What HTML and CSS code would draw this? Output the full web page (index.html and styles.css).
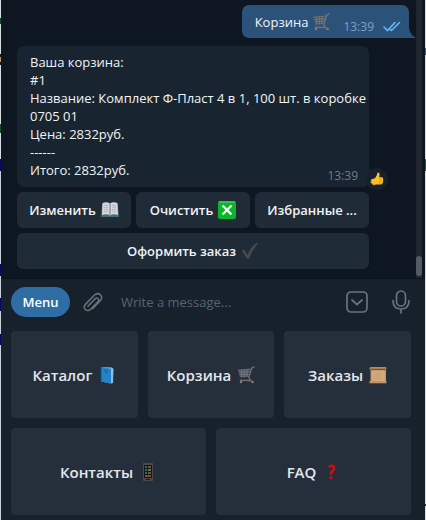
FILE: index.html
```html
<!DOCTYPE html>
<html lang="ru">
<head>
<meta charset="utf-8">
<meta name="viewport" content="width=device-width, initial-scale=1">
<title>Корзина</title>
<link rel="stylesheet" href="styles.css">
</head>
<body>
<svg class="defs" aria-hidden="true">
  <symbol id="cart" viewBox="0 0 18 18">
    <path d="M1 4l12-1-2 7-8 1z" fill="#4d545b"/>
    <path d="M17.500 .8l-2.700 1.200-3 9.500 1.500 2.700H3.500" fill="none" stroke="#777a7d" stroke-width="1.100"/>
    <path d="M1 4.200l13-1.200M2 6.500l11-.8M2.500 8.700l9.700-.5M3.500 11l8-.5M4 4l1 7M7 4l.5 7M10 3.500V10.500" fill="none" stroke="#85888b" stroke-width=".6"/>
    <circle cx="4" cy="16" r="1.300" fill="#9b765c"/><circle cx="15.500" cy="16" r="1.300" fill="#9b765c"/>
    <path d="M3 14.200l12.500.8" stroke="#73777a" stroke-width=".9"/>
  </symbol>
</svg>
<div class="screen">
  <div class="edge edge-left"></div>
  <main class="app">
    <section class="chat">
      <div class="messages">
        <div class="bubble outgoing">
          <span>Корзина</span>
          <svg class="emoji cart" viewBox="0 0 18 18"><use href="#cart"/></svg>
          <time class="sent">13:39</time>
          <svg class="checks" viewBox="0 0 18 11"><path d="M1 6l3.500 3.500L12 1.500M8.500 9.500L16.500 1.500M7.500 8.500l1 1" fill="none" stroke="#69b8f5" stroke-width="1.600" stroke-linecap="round"/></svg>
          <svg class="tail" viewBox="0 0 7 10"><path d="M0 0v10h7Q1 7 0 0z" fill="#2b5278"/></svg>
        </div>
        <article class="incoming">
          <div class="bubble details">
            <p>Ваша корзина:<br>#1<br>Название: Комплект Ф-Пласт 4 в 1, 100 шт. в коробке 0705 01<br>Цена: 2832руб.<br>------<br>Итого: 2832руб.</p>
            <time class="received">13:39</time>
            <button class="reaction" aria-label="Нравится">
              <svg viewBox="0 0 14 14"><path d="M5 6.300L7 2.800Q7.100.5 8.300.6 10.200.8 9.200 5.200H12q1.500.3 1 1.800.8.900 0 2 .5 1-.4 1.700 0 1.500-1.500 1.900H5.500L3.500 13 1 10.500 1.500 7.200z" fill="#ffc02e"/><path d="M9 7h3.500M9 9h3.500M8.800 11h3" stroke="#d98b19" stroke-width=".7"/><path d="M1.500 7.500l-.5 3L3.500 13l2-.5" fill="none" stroke="#e99b22" stroke-width=".9"/></svg>
            </button>
          </div>
          <div class="actions">
            <button>Изменить <svg class="emoji" viewBox="0 0 18 18"><path d="M1 3h16l1 13H0z" fill="#496975"/><path d="M1.500 2Q6 .5 9 2.500 12 .5 16.500 2L17 14Q12 12.500 9 14.500 6 12.500 1 14z" fill="#d4d5d9"/><path d="M9 2.500v12" stroke="#777f88"/><path d="M3 4.500l4-.2M3 6.500l4-.2M3 8.500l4-.2M3 10.500l4-.2M11 4.300l4 .2M11 6.300l4 .2M11 8.300l4 .2M11 10.300l4 .2" stroke="#a8abb3" stroke-width=".7"/></svg></button>
            <button>Очистить <svg class="emoji" viewBox="0 0 18 18"><rect width="18" height="18" rx="2" fill="#0bb52b"/><path d="M1 1h16" stroke="#53d565"/><path d="M4.500 4.500l9 9M13.500 4.500l-9 9" stroke="#f3fff3" stroke-width="2.300"/></svg></button>
            <button>Избранные ...</button>
            <button class="wide">Оформить заказ <svg class="emoji" viewBox="0 0 18 18"><path d="M1 9q2-2 3.500.5L6.500 13Q10 4 16 1q1.500 0 .5 1.500Q11 8 8.500 16q-1.500 1.500-3 0z" fill="#48494b"/></svg></button>
          </div>
        </article>
      </div>
      <div class="scrollbar"><div class="thumb"></div></div>
    </section>
    <form class="composer">
      <button type="button" class="menu">Menu</button>
      <button type="button" class="icon attach" aria-label="Attach"><svg viewBox="0 0 20 22"><path d="M5 14.200l7-7.300q1.700-1.600 3.100-.2 1.300 1.400-.2 3L7.600 17.200q-2.700 2.600-5.200.3-2.500-2.700.2-5.400L11.500 3q3-2.700 5.800-.2 2.800 3-.1 6l-7.700 8" transform="translate(0 1)"/></svg></button>
      <input type="text" aria-label="Message" placeholder="Write a message...">
      <button type="button" class="icon keyboard-toggle" aria-label="Bot keyboard"><svg viewBox="0 0 22 22"><rect x="1" y="1" width="20" height="20" rx="4"/><path d="M6 9l5 4.500L16 9"/></svg></button>
      <button type="button" class="icon voice" aria-label="Voice message"><svg viewBox="0 0 18 24"><rect x="4.500" y="1" width="9" height="15" rx="4.500"/><path d="M1 10.500v1q.5 7.500 8 7.500t8-7.500v-1M9 19v4"/></svg></button>
    </form>
    <section class="keyboard">
      <button>Каталог <svg class="emoji" viewBox="0 0 18 18"><path d="M3.500 1l10.500.5 1.500 1.500-.5 14-2 .5L3.500 15.500z" fill="#88bfe4"/><path d="M3 .8l10 2v14.700L3 15.500z" fill="#2383cd"/><path d="M3.200 1v14.500" stroke="#14629f"/><path d="M6 4.500l4.500.7M7 6.500l2.500.4" stroke="#14639e"/></svg></button>
      <button>Корзина <svg class="emoji cart" viewBox="0 0 18 18"><use href="#cart"/></svg></button>
      <button>Заказы <svg class="emoji" viewBox="0 0 18 18"><path d="M1.500 1h15.500v16H1.500z" fill="#c69b6c"/><path d="M3 4h12.500v11H3z" fill="#d4ae80"/><path d="M.5 1.500h17v2H.5z" fill="#a97b50"/><path d="M2 3.700h14.500" stroke="#65452f"/><path d="M.5 15h17v2.300H.5z" fill="#c4935f"/><path d="M4 7h10M4 9h10M4 11h10M4 13h10" stroke="#c0986b" stroke-width=".7"/></svg></button>
      <button class="half">Контакты <svg class="emoji" viewBox="0 0 18 18"><rect x="4" width="10" height="18" rx="1" fill="#4c4a47"/><path d="M5 2h8v13H5z" fill="#11191a"/><path d="M6 4h2M6 7h2M6 10h2" stroke="#368677" stroke-width="1.400"/><path d="M9 4h3M9 10h3M6 13h6" stroke="#a65b42" stroke-width="1.400"/><path d="M9 7h3" stroke="#8c9361" stroke-width="1.400"/><path d="M7 16.500h4" stroke="#191b1c"/></svg></button>
      <button class="half">FAQ <svg class="emoji" viewBox="0 0 18 18"><path d="M6.500 4Q11.800 1.200 12 5q0 2-1.800 3.500-1.500 1-1.300 3" fill="none" stroke="#c41116" stroke-width="2.800"/><circle cx="9" cy="14.700" r="1.700" fill="#c41116"/></svg></button>
    </section>
  </main>
  <div class="edge edge-right"></div>
</div>
</body>
</html>
```
FILE: styles.css
```css
* { box-sizing: border-box; }
body {
  margin: 0;
  background: #17212b;
  color: #f1f4f6;
  font: 13px/18px "Open Sans", "Noto Sans", sans-serif;
}
button, input { font: inherit; color: inherit; border: 0; padding: 0; margin: 0; }
button { cursor: pointer; }
svg { display: block; flex: none; }
p { margin: 0; }
.defs { position: absolute; width: 0; height: 0; }
.screen { display: flex; min-height: 100vh; }
.edge { flex: 0 0 1px; }
.edge-left {
  background: linear-gradient(#d5dfe2 0 18px, #164b28 18px 24px, #d5dfe2 24px 54px, #17191a 54px 57px, #c29565 57px 62px, #17191a 62px 65px, #d5dfe2 65px 124px, #174d28 124px 133px, #d5dfe2 133px 159px, #09095f 159px 171px, #c4d1d8 171px 264px, #09095f 264px 276px, #c4d1d8 276px 298px, #09095f 298px 311px, #c4d1d8 311px 334px, #09095f 334px 345px, #c4d1d8 345px);
}
.edge-right {
  background: linear-gradient(#d9e0e4 0 48px, #246aa5 48px 55px, #d9e0e4 55px 159px, #14632a 159px 171px, #d9e0e4 171px 504px, #26313a 504px 506px, #d9e0e4 506px);
}
.app { flex: 1; min-width: 0; display: flex; flex-direction: column; }
.chat { display: flex; background: #0e1621; border-bottom: 1px solid #0b131b; }
.messages { flex: 1; min-width: 0; padding: 5px 7px 9px 16px; }
.scrollbar { width: 6px; margin-right: 3px; background: #20272f; display: flex; align-items: flex-end; padding-bottom: 2px; }
.thumb { width: 6px; height: 20px; border-radius: 3px; background: #555b64; }
.bubble { position: relative; border-radius: 7px; }
.outgoing {
  display: flex;
  align-items: center;
  width: fit-content;
  height: 33px;
  margin-left: auto;
  padding: 0 8px 0 13px;
  background: #2b5278;
  border-bottom-right-radius: 0;
}
.outgoing .emoji { margin-left: 4px; }
.emoji { width: 18px; height: 18px; }
.sent, .received { font-size: 12px; }
.sent { margin: 10px 9px 0 13px; color: #79a2c8; }
.checks { width: 18px; height: 11px; margin-top: 10px; }
.tail { position: absolute; left: 100%; bottom: 0; width: 7px; height: 10px; }
.incoming { width: calc(100% - 40px); margin-top: 8px; }
.details { padding: 7px 2px 8px 13px; background: #182530; }
.received { position: absolute; right: 11px; bottom: 2px; color: #6c7c8b; }
.reaction {
  position: absolute;
  right: -19px;
  bottom: -3px;
  width: 22px;
  height: 22px;
  border-radius: 50%;
  background: #16212b;
  display: grid;
  place-items: center;
}
.reaction svg { width: 14px; height: 14px; }
.actions { display: grid; grid-template-columns: repeat(3, 1fr); gap: 5px; margin-top: 5px; }
.actions button, .keyboard button { display: flex; align-items: center; justify-content: center; gap: 5px; white-space: nowrap; }
.actions button { height: 36px; border-radius: 6px; background: #1f2c38; font-weight: 600; }
.actions .wide { grid-column: 1 / -1; }
.composer { display: flex; align-items: center; height: 46px; padding: 0 15px 0 10px; background: #17212b; }
.menu { width: 59px; height: 30px; border-radius: 15px; background: #2f6ea5; color: #fff; font-weight: 600; }
.icon { background: none; }
.icon svg { fill: none; stroke: #6a737c; stroke-width: 2; stroke-linecap: round; }
.attach { margin-left: 13px; }
.attach svg { width: 20px; height: 22px; stroke-width: 1.5; }
.composer input { flex: 1; min-width: 0; margin-left: 18px; background: none; outline: 0; }
.composer input::placeholder { color: #59636e; opacity: 1; }
.keyboard-toggle svg { width: 22px; height: 22px; stroke-width: 1.7; }
.voice { margin-left: 24px; }
.voice svg { width: 18px; height: 24px; stroke-width: 1.7; }
.keyboard { flex: 1; display: grid; grid-template-columns: repeat(6, 1fr); grid-auto-rows: 87px; gap: 10px; padding: 6px 14px 5px 10px; }
.keyboard button { grid-column: span 2; gap: 6px; border-radius: 4px; background: #242f3b; font-size: 15px; font-weight: 600; color: #e4e7ea; }
.keyboard .half { grid-column: span 3; }
```
